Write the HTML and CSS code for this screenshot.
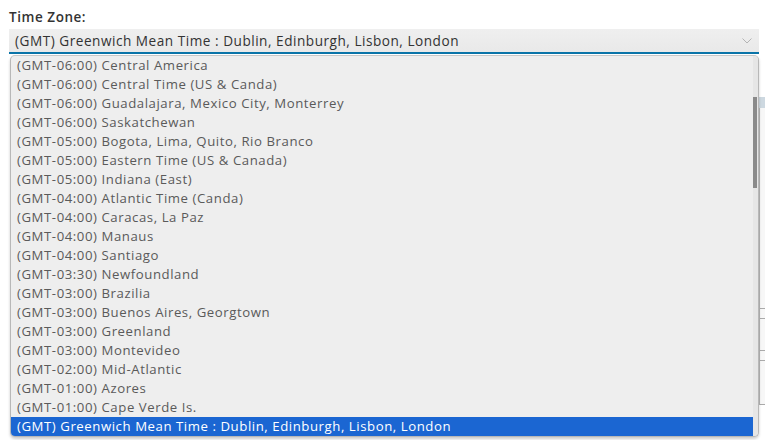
FILE: index.html
```html
<!DOCTYPE html>
<html>
<head>
<meta charset="utf-8">
<link rel="stylesheet" href="styles.css">
</head>
<body>
<div class="page">
  <div class="form">
    <label class="label">Time Zone:</label>
    <div class="select">
      <span class="value">(GMT) Greenwich Mean Time : Dublin, Edinburgh, Lisbon, London</span>
      <svg class="chev" width="10" height="6" viewBox="0 0 10 6"><path d="M0.5 0.5 L5 5 L9.5 0.5" fill="none" stroke="#b4b4b4" stroke-width="1"/></svg>
    </div>
    <div class="dropdown">
      <ul class="options">
        <li>(GMT-06:00) Central America</li>
        <li>(GMT-06:00) Central Time (US &amp; Canda)</li>
        <li>(GMT-06:00) Guadalajara, Mexico City, Monterrey</li>
        <li>(GMT-06:00) Saskatchewan</li>
        <li>(GMT-05:00) Bogota, Lima, Quito, Rio Branco</li>
        <li>(GMT-05:00) Eastern Time (US &amp; Canada)</li>
        <li>(GMT-05:00) Indiana (East)</li>
        <li>(GMT-04:00) Atlantic Time (Canda)</li>
        <li>(GMT-04:00) Caracas, La Paz</li>
        <li>(GMT-04:00) Manaus</li>
        <li>(GMT-04:00) Santiago</li>
        <li>(GMT-03:30) Newfoundland</li>
        <li>(GMT-03:00) Brazilia</li>
        <li>(GMT-03:00) Buenos Aires, Georgtown</li>
        <li>(GMT-03:00) Greenland</li>
        <li>(GMT-03:00) Montevideo</li>
        <li>(GMT-02:00) Mid-Atlantic</li>
        <li>(GMT-01:00) Azores</li>
        <li>(GMT-01:00) Cape Verde Is.</li>
        <li class="selected">(GMT) Greenwich Mean Time : Dublin, Edinburgh, Lisbon, London</li>
      </ul>
      <div class="scrollbar"><div class="thumb"></div></div>
    </div>
  </div>
  <div class="side">
    <div class="side-head"></div>
    <div class="side-body">
      <div class="side-gap1"></div>
      <div class="side-row"></div>
      <div class="side-gap2"></div>
      <div class="side-row"></div>
      <div class="side-gap3"></div>
    </div>
  </div>
</div>
</body>
</html>
```

FILE: styles.css
```css
html, body {
  margin: 0;
  padding: 0;
  background: #ffffff;
}
body {
  font-family: "Open Sans", "Liberation Sans", sans-serif;
  width: 765px;
  height: 440px;
  overflow: hidden;
}
.page {
  display: flex;
  align-items: flex-start;
  padding-left: 9px;
}
.form {
  position: relative;
  width: 750px;
  flex: none;
}
.label {
  display: block;
  height: 29px;
  padding-top: 9px;
  box-sizing: border-box;
  font-size: 13.5px;
  font-weight: 600;
  letter-spacing: 0.55px;
  color: #333333;
  line-height: 17px;
}
.select {
  height: 25px;
  box-sizing: border-box;
  background: linear-gradient(#efefef, #e9e9e9);
  border-bottom: 2px solid #0a74a8;
  display: flex;
  align-items: center;
  justify-content: space-between;
  padding: 0 7px 0 6px;
}
.value {
  font-size: 13.6px;
  letter-spacing: 0.52px;
  color: #333333;
  line-height: 18px;
}
.chev {
  display: block;
  margin-top: 1px;
}
.dropdown {
  position: absolute;
  left: 1px;
  top: 55px;
  width: 749px;
  height: 382px;
  box-sizing: border-box;
  background: #eeeeee;
  border: 1px solid #b8b8b8;
  border-top-color: #c8c8c8;
  border-radius: 5px;
  box-shadow: 0 2px 3px rgba(0,0,0,0.2);
  overflow: hidden;
  display: flex;
}
.options {
  list-style: none;
  margin: 0;
  padding: 0;
  flex: 1;
}
.options li {
  height: 19px;
  line-height: 19px;
  padding-left: 6px;
  font-size: 13.2px;
  letter-spacing: 0.56px;
  color: #5a5a5a;
  white-space: nowrap;
}
.options li.selected {
  background: #1b66d2;
  color: #ffffff;
}
.scrollbar {
  width: 5px;
  flex: none;
  background: #e6e6e6;
  padding-top: 41px;
  box-sizing: border-box;
}
.thumb {
  height: 91px;
  width: 4px;
  background: #8a8a8a;
}
.side {
  flex: 1;
  margin-top: 97px;
}
.side-head {
  height: 11px;
  background: #cdd8e0;
}
.side-body {
  border-left: 1px solid #b5b5b5;
  background: #f7f7f7;
}
.side-gap1 { height: 200px; }
.side-row {
  height: 9px;
  border-top: 1px solid #aaaaaa;
  border-bottom: 1px solid #aaaaaa;
}
.side-gap2 { height: 31px; }
.side-gap3 { height: 43px; border-bottom: 1px solid #aaaaaa; }
```
